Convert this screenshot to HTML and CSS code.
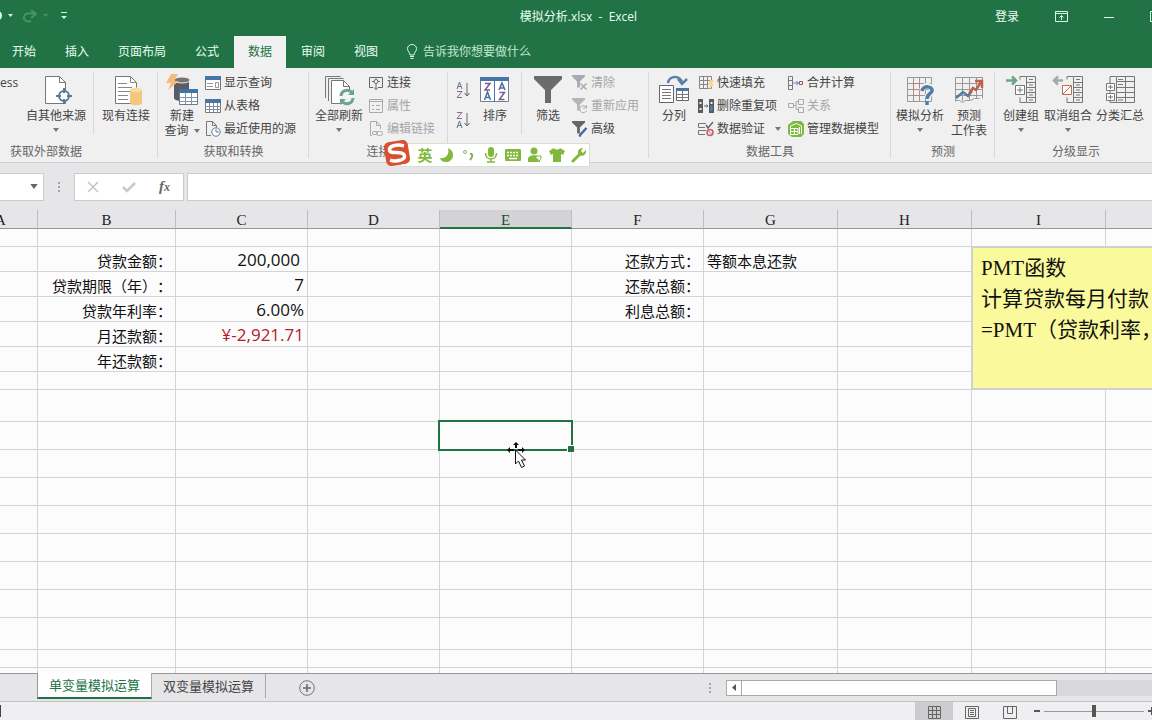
FILE: index.html
```html
<!DOCTYPE html>
<html lang="zh-CN">
<head>
<meta charset="utf-8">
<title>模拟分析.xlsx - Excel</title>
<link rel="stylesheet" href="styles.css">
</head>
<body>
<svg class="defs" aria-hidden="true">
  <symbol id="caret" viewBox="0 0 6 4"><path d="M0 0h6L3 4z" fill="currentColor"/></symbol>
  <symbol id="funnel" viewBox="0 0 28 28"><path d="M0 0h28v3L17 14v13h-6V14L0 3z" fill="currentColor"/></symbol>
</svg>

<header class="titlebar">
  <div class="quick">
    <button class="quick-undo" aria-label="撤消"><svg width="14" height="12" viewBox="0 0 14 12"><path d="M0 2c2 1 2 7-1 8z" fill="#e8fff2" stroke="#e8fff2"/><path d="M8 4h5l-2.500 3z" fill="#d5f5e2"/></svg></button>
    <button class="quick-redo" aria-label="恢复"><svg width="27" height="16" viewBox="0 0 27 16"><path d="M9 13C2 15 0 9 4 6c2-1 5-1 9 0M9 2l5 4-5 4" fill="none" stroke="#4b9168" stroke-width="2"/><path d="M21 6h5l-2.500 3z" fill="#4b9168"/></svg></button>
    <button aria-label="自定义快速访问工具栏"><svg width="6" height="8" viewBox="0 0 6 8"><path d="M0 .5h6" stroke="#d5f5e2"/><path d="M0 4h6L3 7z" fill="#d5f5e2"/></svg></button>
  </div>
  <h1 class="doc-title">模拟分析.xlsx &nbsp;- &nbsp;Excel</h1>
  <div class="window-tools">
    <a class="signin" href="#">登录</a>
    <button aria-label="功能区显示选项"><svg width="13" height="11" viewBox="0 0 13 11" fill="none" stroke="#d9f7e5"><path d="M.5.5h12v10H.5zM.5 2.500h12M6.500 9V4.500M4.500 6.500l2-2 2 2"/></svg></button>
    <button aria-label="最小化"><svg width="10" height="11" viewBox="0 0 10 11"><path d="M0 6.500h10" stroke="#d9f7e5"/></svg></button>
    <button aria-label="最大化"><svg width="10" height="11" viewBox="0 0 10 11"><path d="M.5.5h9v10h-9z" fill="none" stroke="#d9f7e5"/></svg></button>
  </div>
</header>

<nav class="tabs">
  <button>开始</button><button>插入</button><button>页面布局</button><button>公式</button><button class="active">数据</button><button>审阅</button><button>视图</button>
  <button class="tell"><svg width="10" height="15" viewBox="0 0 10 15" fill="none" stroke="#d9f7e5"><path d="M3 11c0-3-2.500-3-2.500-6.500a4.500 4 0 0 1 9 0C9.500 8 7 8 7 11zM3 12.500h4M3.500 14.500h3"/></svg>告诉我你想要做什么</button>
</nav>

<section class="ribbon">
  <div class="group g-external">
    <div class="body">
      <span class="clipped">ess</span>
      <button class="big w70"><svg width="34" height="32" viewBox="0 0 34 32"><path d="M6.500 2.500h14l6 6v21h-20z" fill="#fff" stroke="#777"/><path d="M20.500 2.500v6h6" fill="none" stroke="#777"/><circle cx="25" cy="22" r="5" fill="#fff" stroke="#5b76a0" stroke-width="2"/><path d="M25 14v5M25 25v5M17 22h5M28 22h5" stroke="#5b76a0" stroke-width="2"/></svg>自其他来源<svg class="caret"><use href="#caret"/></svg></button>
      <i class="sep"></i>
      <button class="big w60"><svg width="32" height="32" viewBox="0 0 32 32"><path d="M5.500 2.500h15l6 6v21h-21z" fill="#fff" stroke="#777"/><path d="M20.500 2.500v6h6M8 9.500h9M8 13.500h14M8 17.500h14M8 21.500h10M8 25.500h10" fill="none" stroke="#888"/><path d="M20 16v13c0 3 12 3 12 0V16z" fill="#f3c77d"/><ellipse cx="26" cy="16" rx="6" ry="2.500" fill="#f9dba3"/></svg>现有连接</button>
    </div>
    <div class="label"><span class="ext-label">获取外部数据</span></div>
  </div>

  <div class="group g-get">
    <div class="body">
      <button class="big w46"><svg width="32" height="32" viewBox="0 0 32 32"><path d="M8 7v17c0 4 15 4 15 0V7z" fill="#5d5d61"/><ellipse cx="16" cy="6" rx="8" ry="3" fill="#747478" stroke="#eee"/><path d="M5 0h7L8 7h5L2 16l3-7H0z" fill="#f2bd7c"/><path d="M13.500 15.500h18v15h-18z" fill="#fff" stroke="#6a7a8c"/><path d="M13 15h19v4H13z" fill="#3f74a8"/><path d="M14 23.500h17M14 27.500h17M19.500 19v11M25.500 19v11" stroke="#8195a8"/></svg>新建<span class="nowrap">查询<svg class="caret inline"><use href="#caret"/></svg></span></button>
      <div class="stack">
        <button><svg viewBox="0 0 16 16"><path d="M.5 1.500h15v13H.5z" fill="#fff" stroke="#777"/><path d="M0 1h16v4H0z" fill="#4675a8"/><path d="M2 8.500h6M2 11.500h6M10.500 7.500h3v5h-3z" fill="none" stroke="#999"/></svg>显示查询</button>
        <button><svg viewBox="0 0 16 16"><path d="M.5 1.500h15v13H.5z" fill="#fff" stroke="#777"/><path d="M0 1h16v4H0z" fill="#4675a8"/><path d="M4.500 5v10M8.500 5v10M12.500 5v10M0 8.500h16M0 11.500h16" stroke="#7e8d99"/></svg>从表格</button>
        <button><svg viewBox="0 0 16 16"><path d="M6 14.500H1.500V.5h6l4 4v2M7.500.5v4h4" fill="none" stroke="#777"/><circle cx="11" cy="11" r="4.200" fill="#fff" stroke="#5e7995"/><path d="M11 8v3h3" fill="none" stroke="#5e7995"/></svg>最近使用的源</button>
      </div>
    </div>
    <div class="label">获取和转换</div>
  </div>

  <div class="group g-conn">
    <div class="body">
      <button class="big w58"><svg width="32" height="32" viewBox="0 0 32 32" fill="none"><path d="M2.500 24V2.500h15M5.500 27V4.500h15" stroke="#777"/><path d="M8.500 6.500h12l6 6v17h-18z" fill="#fff" stroke="#777"/><path d="M20.500 6.500v6h6" stroke="#777"/><circle cx="24" cy="23" r="8" fill="#f2f5f3"/><path d="M18 22a6 6 0 0 1 11-3M30 24a6 6 0 0 1-11 3" stroke="#6ba58a" stroke-width="3"/><path d="M31 15v6h-6zM17 31v-6h6z" fill="#6ba58a"/></svg>全部刷新<svg class="caret"><use href="#caret"/></svg></button>
      <div class="stack">
        <button><svg viewBox="0 0 16 16" fill="none" stroke="#666"><path d="M5 12.500H1.500v-10h13v10H10"/><circle cx="8" cy="6.500" r="2"/><path d="M8 3.500v1M8 8.500v6M4 6.500h2M10 6.500h2M6 12.500l2 2 2-2"/></svg>连接</button>
        <button disabled><svg viewBox="0 0 16 16" fill="none" stroke="#aaa"><path d="M1.500 1.500h13v13h-13zM1 3.500h14"/><path d="M4 7.500h2M4 11.500h2M8 7.500h4M8 11.500h4"/></svg>属性</button>
        <button disabled><svg viewBox="0 0 16 16" fill="none" stroke="#aaa"><path d="M4 14.500H2.500V.5h6l4 4V8M8.500.5v4h4"/><rect x="4.500" y="10.500" width="5" height="3" rx="1.500"/><rect x="8.500" y="10.500" width="6" height="4" rx="2"/></svg>编辑链接</button>
      </div>
    </div>
    <div class="label">连接</div>
  </div>

  <div class="group g-sort">
    <div class="body">
      <div class="sorters">
        <button aria-label="升序"><svg width="15" height="18" viewBox="0 0 15 18" fill="none"><path d="M1 8l2.500-7L6 8M2 5.500h3" stroke="#5d7394"/><path d="M1 10.500h5l-5 6h5" stroke="#8d6794"/><path d="M11 2v13M8.500 12l2.500 3 2.500-3" stroke="#666"/></svg></button>
        <button aria-label="降序"><svg width="15" height="18" viewBox="0 0 15 18" fill="none"><path d="M1 1.500h5l-5 6h5" stroke="#8d6794"/><path d="M1 17l2.500-7L6 17M2 14.500h3" stroke="#5d7394"/><path d="M11 2v13M8.500 12l2.500 3 2.500-3" stroke="#666"/></svg></button>
      </div>
      <button class="big w48"><svg width="30" height="32" viewBox="0 0 30 32" fill="none"><path d="M.5 3.500h28v24H.5z" fill="#fff" stroke="#708090"/><path d="M0 3h29v4H0zM14 3h1v25h-1z" fill="#4675a8"/><path d="M5 9.500h5l-5 6.500h5" stroke="#7d5a91" stroke-width="1.500"/><path d="M4.500 26l3-8 3 8M5.500 23.500h4M19 16l3-7 3 7M20 14h4" stroke="#4a719e" stroke-width="1.500"/><path d="M19.500 18.500h5l-5 7h5" stroke="#7d5a91" stroke-width="1.500"/></svg>排序</button>
      <i class="sep"></i>
      <button class="big w48"><svg width="28" height="32" viewBox="0 -2 28 32" color="#6b6b6d"><use href="#funnel" width="28" height="28"/></svg>筛选</button>
      <div class="stack">
        <button disabled><svg viewBox="0 0 16 16" color="#a3acb5"><use href="#funnel" width="13" height="13"/><path d="M8.500 8.500l6 6M14.500 8.500l-6 6" stroke="#b5a5aa" stroke-width="1.500"/></svg>清除</button>
        <button disabled><svg viewBox="0 0 16 16" color="#b5b5b5"><use href="#funnel" width="13" height="13"/><path d="M14 9a3.500 3.500 0 1 0 .5 3.500M14.500 7v3H11" fill="none" stroke="#aaa"/></svg>重新应用</button>
        <button><svg viewBox="0 0 16 16" color="#666"><use href="#funnel" width="13" height="13"/><path d="M14.500 7l-6 6.500-1 2" stroke="#456ba3" stroke-width="2.500"/></svg>高级</button>
      </div>
    </div>
  </div>

  <div class="group g-tools">
    <div class="body">
      <button class="big w48"><svg width="32" height="32" viewBox="0 0 32 32" fill="none"><path d="M10 9c1-8 13-8 14 0M20 5l4 5 5-5" stroke="#5a7fa8" stroke-width="2.500"/><path d="M1.500 11.500h14v17h-14z" fill="#fff" stroke="#666"/><path d="M4 15.500h9M4 18.500h9M4 21.500h9M4 24.500h9" stroke="#777"/><path d="M18.500 14.500h12v12h-12z" fill="#fff" stroke="#666"/><path d="M18 14h13v3H18z" fill="#4675a8"/><path d="M18 20.500h12M18 23.500h12M24.500 17v9" stroke="#777"/></svg>分列</button>
      <div class="stack">
        <button><svg viewBox="0 0 16 16" fill="none"><path d="M1.500 1.500h12v12h-12zM1 5.500h13M1 9.500h10M5.500 1v13M9.500 1v13" stroke="#888"/><path d="M12 5h4l-2 4h2l-5 6 1-5h-2z" fill="#f4d790"/></svg>快速填充</button>
        <button><svg viewBox="0 0 16 16"><path d="M0 1h5v14H0zM11 1h5v14h-5z" fill="#5b5b5e"/><path d="M1.500 4h2v2h-2zM12.500 4h2v2h-2zM1.500 10h2v2h-2z" fill="#eee"/><path d="M12.500 8h2v5h-2z" fill="#4c83bd"/><path d="M6 8h4M8.500 6.500L10 8 8.500 9.500" fill="none" stroke="#47688d"/></svg>删除重复项</button>
        <button><svg viewBox="0 0 16 16" fill="none"><path d="M8 2.500H.5v4H7M8 9.500H.5v4H7" stroke="#777"/><path d="M8 4l2 3 5-6" stroke="#666" stroke-width="1.500"/><circle cx="12" cy="11.500" r="3" stroke="#c55d68" stroke-width="1.500"/><path d="M10 9.500l4 4" stroke="#c55d68"/></svg>数据验证<svg class="caret far"><use href="#caret"/></svg></button>
      </div>
      <div class="stack">
        <button><svg viewBox="0 0 16 16" fill="none"><path d="M.5 1.500h4v13h-4zM0 5.500h5M0 10.500h5" stroke="#777"/><path d="M5.500 8h5M8.500 6l2 2-2 2" stroke="#557fae"/><path d="M11.500 6.500h3v3h-3z" stroke="#a8516a"/></svg>合并计算</button>
        <button disabled><svg viewBox="0 0 16 16" fill="none" stroke="#aaa"><path d="M.5 5.500h5v4h-5zM10.500 1.500h5v5h-5zM10.500 9.500h5v5h-5zM10 3.500H8v8h2M6 7.500h2"/></svg>关系</button>
        <button><svg viewBox="0 0 16 16"><path d="M5 0h8l3 3v10l-3 3H4l-4-3V4z" fill="#7db83f"/><path d="M2.500 5l6-2.500L13.500 5v8M2.500 5v9M3 7.500h7v6H3M6.500 7.500v6M3 10.500h7M11.500 6v7" fill="none" stroke="#fff"/></svg>管理数据模型</button>
      </div>
    </div>
    <div class="label">数据工具</div>
  </div>

  <div class="group g-forecast">
    <div class="body">
      <button class="big w52"><svg width="30" height="32" viewBox="0 0 30 32" fill="none"><path d="M2.500 3.500h24v24h-24zM2 9.500h25M2 15.500h25M2 21.500h25M8.500 3v25M14.500 3v25M20.500 3v25" stroke="#999"/><path d="M8.500 9.500h6v6h-6zM8.500 21.500h6" stroke="#c67a72"/><path d="M17 16c1-6 11-5 10 1-1 4-5 3-5 8" stroke="#f2f2f2" stroke-width="6"/><path d="M17 17c1-6 11-5 10 0-1 3-5 3-5 8M22 27v4" stroke="#507da5" stroke-width="3.500"/></svg>模拟分析<svg class="caret"><use href="#caret"/></svg></button>
      <button class="big w46"><svg width="30" height="32" viewBox="0 0 30 32" fill="none"><path d="M1.500 27.500v-24h27v21M1.500 26.500h4l3 2 3-2h5l4-2h5M1 9.500h27M1 15.500h27M1 21.500h27M8.500 3v24M15.500 3v24M22.500 3v21" stroke="#999"/><path d="M2 24l7-6 5 4 4-5" stroke="#4e7e9f" stroke-width="2.500"/><path d="M15 20l4-6 3 2 5-8M21 7h7v7" stroke="#bd6148" stroke-width="2.500"/></svg>预测<span class="nowrap">工作表</span></button>
    </div>
    <div class="label">预测</div>
  </div>

  <div class="group g-outline">
    <div class="body">
      <button class="big w48"><svg width="32" height="32" viewBox="0 0 32 32" fill="none"><path d="M1 6.500h9M7 2.500l4 4-4 4" stroke="#6aa586" stroke-width="2.500"/><path d="M21.500 2.500h9v26h-9zM21 8.500h9M21 13.500h9M21 18.500h9M21 23.500h9M24 5.500h4M24 11h4M24 16h4M24 21h4M24 26h4M21 2.500h-6v3M21 28.500h-6v-5" stroke="#777"/><path d="M10.500 11.500h9v9h-9zM12 16h6M15 13v6" fill="#fff" stroke="#777"/></svg>创建组<svg class="caret"><use href="#caret"/></svg></button>
      <button class="big w46"><svg width="32" height="32" viewBox="0 0 32 32" fill="none"><path d="M2 6.500h9M6 2.500l-4 4 4 4" stroke="#a3aaa8" stroke-width="2.500"/><path d="M21.500 2.500h9v26h-9zM21 8.500h9M21 13.500h9M21 18.500h9M21 23.500h9M24 5.500h4M24 11h4M24 16h4M24 21h4M24 26h4M21 2.500h-6v3M21 28.500h-6v-5" stroke="#777"/><path d="M10.500 11.500h9v9h-9zM11 20l8-8" fill="#fff" stroke="#bd6e55"/></svg>取消组合<svg class="caret"><use href="#caret"/></svg></button>
      <button class="big w58"><svg width="32" height="32" viewBox="0 0 32 32" fill="none" stroke="#777"><path d="M12.500 2.500h18v26h-18zM12 7.500h18M12 13.500h18M12 18.500h18M12 23.500h18M21.500 3v25M14 5.500h5M14 10.500h5M14 26h5M12 2.500H6v26h6"/><path d="M2.500 9.500h8v7h-8zM4 13h5M6.500 11v4M2.500 19.500h8v7h-8zM4 23h5M6.500 21v4" fill="#fff"/></svg>分类汇总</button>
    </div>
    <div class="label">分级显示</div>
  </div>

  <div class="ime">
    <svg class="ime-logo" width="28" height="28" viewBox="0 0 28 28"><g transform="rotate(-9 14 14)"><rect x="2" y="2" width="24" height="24" rx="5" fill="#d8502f"/><path d="M22 8C15 5 7 6 7 10c0 5 14 2 14 8 0 4-9 5-15 2" fill="none" stroke="#fff" stroke-width="3.500"/></g></svg>
    <button class="ime-lang">英</button>
    <button aria-label="半角"><svg width="16" height="16" viewBox="0 0 16 16"><path d="M9 1c8 3 6 14-2 14-3 0-5-1-6-4 5 1 10-3 8-10z" fill="#82b93c"/></svg></button>
    <button aria-label="标点"><svg width="16" height="16" viewBox="0 0 16 16"><circle cx="4" cy="5" r="1.500" fill="none" stroke="#8fb066"/><path d="M9 7c3-1 3 3 0 6" fill="none" stroke="#8aac5e" stroke-width="2"/></svg></button>
    <button aria-label="语音"><svg width="16" height="16" viewBox="0 0 16 16"><rect x="5" y="0" width="6" height="10" rx="3" fill="#82b93c"/><path d="M2.500 6c0 8 11 8 11 0M8 12v3M4 15h8" fill="none" stroke="#82b93c" stroke-width="1.500"/></svg></button>
    <button aria-label="软键盘"><svg width="16" height="16" viewBox="0 0 16 16"><rect y="2" width="16" height="12" rx="1" fill="#82b93c"/><path d="M2 5.500h12M2 8.500h12" stroke="#fff" stroke-width="1.500" stroke-dasharray="2 1"/><path d="M4 11.500h8" stroke="#fff" stroke-width="1.500"/></svg></button>
    <button aria-label="用户"><svg width="16" height="16" viewBox="0 0 16 16"><circle cx="7" cy="4" r="3.500" fill="#82b93c"/><path d="M1 15v-3c0-5 12-5 12 0v3z" fill="#82b93c"/><path d="M3 12h4M9 9h5v3l-3 3v-3H9z" fill="#fff" stroke="#82b93c"/></svg></button>
    <button aria-label="皮肤"><svg width="16" height="16" viewBox="0 0 16 16"><path d="M5 1c1 2 5 2 6 0l5 3-2 4-2-1v8H4V7L2 8 0 4z" fill="#82b93c"/></svg></button>
    <button aria-label="工具箱"><svg width="16" height="16" viewBox="0 0 16 16"><path d="M2 14l7-7" stroke="#82b93c" stroke-width="3" stroke-linecap="round"/><path d="M12 1c-5 0-6 4-4 7 3 2 8 0 7-5l-3 3-2-2z" fill="#82b93c"/></svg></button>
  </div>
</section>

<section class="formula-bar">
  <div class="namebox"><input aria-label="名称框"><button aria-label="名称列表"><svg width="8" height="5" viewBox="0 0 6 4" color="#666"><use href="#caret"/></svg></button></div>
  <i class="dots"></i>
  <div class="formula-tools">
    <button aria-label="取消"><svg width="12" height="12" viewBox="0 0 12 12"><path d="M1 1l10 10M11 1L1 11" stroke="#c4c4c6" stroke-width="1.500"/></svg></button>
    <button aria-label="输入"><svg width="14" height="12" viewBox="0 0 14 12"><path d="M1 6l4 4 8-8" fill="none" stroke="#c9c9cb" stroke-width="2.500"/></svg></button>
    <button class="fx" aria-label="插入函数"><i>f<small>x</small></i></button>
  </div>
  <input class="formula" aria-label="编辑栏">
</section>

<main class="sheet">
  <table>
    <colgroup><col class="cA"><col class="cB"><col class="c132"><col class="c132"><col class="c132"><col class="c132"><col class="c134"><col class="c134"><col class="c134"><col></colgroup>
    <thead><tr><th class="colA">A</th><th>B</th><th>C</th><th>D</th><th class="current">E</th><th>F</th><th>G</th><th>H</th><th>I</th><th></th></tr></thead>
    <tbody>
      <tr class="r18"><td></td><td></td><td></td><td></td><td></td><td></td><td></td><td></td><td></td><td></td></tr>
      <tr class="r25"><td></td><td class="name">贷款金额：</td><td class="num pad">200,000</td><td></td><td></td><td class="name">还款方式：</td><td>等额本息还款</td><td></td><td class="note-anchor"><aside class="note"><p>PMT函数</p><p>计算贷款每月付款</p><p>=PMT（贷款利率，</p></aside></td><td></td></tr>
      <tr class="r25"><td></td><td class="name">贷款期限（年）：</td><td class="num">7</td><td></td><td></td><td class="name">还款总额：</td><td></td><td></td><td></td><td></td></tr>
      <tr class="r25"><td></td><td class="name">贷款年利率：</td><td class="num">6.00%</td><td></td><td></td><td class="name">利息总额：</td><td></td><td></td><td></td><td></td></tr>
      <tr class="r25"><td></td><td class="name">月还款额：</td><td class="num neg">¥-2,921.71</td><td></td><td></td><td></td><td></td><td></td><td></td><td></td></tr>
      <tr class="r25"><td></td><td class="name">年还款额：</td><td></td><td></td><td></td><td></td><td></td><td></td><td></td><td></td></tr>
      <tr class="r18"><td></td><td></td><td></td><td></td><td></td><td></td><td></td><td></td><td></td><td></td></tr>
      <tr class="r32"><td></td><td></td><td></td><td></td><td></td><td></td><td></td><td></td><td></td><td></td></tr>
      <tr class="r28"><td></td><td></td><td></td><td></td><td class="selected"><svg class="cursor" width="20" height="28" viewBox="0 0 20 28"><path d="M9 1L6 4h2v3h2V4h2zM0 9l3-3v2h4v2H3v2zM18 9l-3-3v2h-4v2h4v2z" fill="#111"/><path d="M8.500 9v14l3-3 3 6.500 3-1.500-3-6h4z" fill="#fff" stroke="#111"/></svg></td><td></td><td></td><td></td><td></td><td></td></tr>
      <tr class="r28"><td></td><td></td><td></td><td></td><td></td><td></td><td></td><td></td><td></td><td></td></tr>
      <tr class="r28"><td></td><td></td><td></td><td></td><td></td><td></td><td></td><td></td><td></td><td></td></tr>
      <tr class="r28"><td></td><td></td><td></td><td></td><td></td><td></td><td></td><td></td><td></td><td></td></tr>
      <tr class="r28"><td></td><td></td><td></td><td></td><td></td><td></td><td></td><td></td><td></td><td></td></tr>
      <tr class="r28"><td></td><td></td><td></td><td></td><td></td><td></td><td></td><td></td><td></td><td></td></tr>
      <tr class="r28"><td></td><td></td><td></td><td></td><td></td><td></td><td></td><td></td><td></td><td></td></tr>
      <tr class="r32"><td></td><td></td><td></td><td></td><td></td><td></td><td></td><td></td><td></td><td></td></tr>
      <tr class="r18"><td></td><td></td><td></td><td></td><td></td><td></td><td></td><td></td><td></td><td></td></tr>
      <tr class="r18"><td></td><td></td><td></td><td></td><td></td><td></td><td></td><td></td><td></td><td></td></tr>
    </tbody>
  </table>
</main>

<div class="sheet-tabs">
  <button class="sheet-tab on">单变量模拟运算</button>
  <button class="sheet-tab">双变量模拟运算</button>
  <button class="add" aria-label="新工作表"><svg width="16" height="16" viewBox="0 0 16 16"><circle cx="8" cy="8" r="7.300" fill="none" stroke="#777"/><path d="M8 4v8M4 8h8" stroke="#666" stroke-width="1.500"/></svg></button>
  <i class="dots"></i>
  <div class="scroll">
    <button aria-label="向左滚动"><svg width="4" height="7" viewBox="0 0 4 7"><path d="M4 0v7L0 3.500z" fill="#555"/></svg></button>
    <div class="thumb"></div>
  </div>
</div>

<footer class="status">
  <i class="status-mark"></i>
  <div class="views">
    <button class="on" aria-label="普通"><svg width="13" height="13" viewBox="0 0 13 13"><path d="M.5.5h12v12H.5zM.5 4.500h12M.5 8.500h12M4.500 0v13M8.500 0v13" fill="none" stroke="#666"/></svg></button>
    <button aria-label="页面布局视图"><svg width="14" height="13" viewBox="0 0 14 13"><path d="M.5.5h13v12H.5zM3.500 2.500h7v8h-7zM5 4.500h4M5 6.500h4M5 8.500h4" fill="none" stroke="#666"/></svg></button>
    <button aria-label="分页预览"><svg width="14" height="13" viewBox="0 0 14 13"><path d="M.5.5h13v12H.5zM4.500 0v7.500M9.500 0v7.500M4.500 7.500h5" fill="none" stroke="#666"/></svg></button>
  </div>
  <button aria-label="缩小"><svg width="6" height="12" viewBox="0 0 6 12"><path d="M0 6h6" stroke="#555" stroke-width="2"/></svg></button>
  <input class="zoom" type="range" value="50" aria-label="缩放">
  <button aria-label="放大"><svg width="8" height="12" viewBox="0 0 8 12"><path d="M0 6h8M4 2v8" stroke="#555" stroke-width="2"/></svg></button>
</footer>
</body>
</html>
```

FILE: styles.css
```css
* { box-sizing: border-box; }
body {
  margin: 0;
  height: 100vh;
  display: flex;
  flex-direction: column;
  overflow: hidden;
  background: #e6e5e7;
  color: #444;
  font: 12px/15px "Open Sans", "Noto Sans CJK SC", sans-serif;
}
button { margin: 0; padding: 0; border: 0; background: none; color: inherit; font: inherit; flex: none; }
input { min-width: 0; margin: 0; padding: 0; border: 0; background: none; font: inherit; }
svg { display: block; flex: none; }
.defs { position: absolute; width: 0; height: 0; }

/* title bar */
.titlebar { flex: none; height: 36px; padding-bottom: 4px; display: grid; grid-template-columns: 1fr auto 1fr; align-items: center; background: #217346; color: #eafff2; overflow: hidden; }
.quick { display: flex; align-items: center; gap: 8px; }
.quick-redo { margin-right: 4px; }
.doc-title { margin: 0; font-size: 12px; font-weight: 400; padding-left: 5px; }
.window-tools { display: flex; align-items: center; justify-content: flex-end; gap: 36px; margin-right: -8px; }
.signin { color: inherit; text-decoration: none; }

/* ribbon tabs */
.tabs { flex: none; height: 32px; display: flex; gap: 1px; background: #217346; color: #eafff2; }
.tabs button { padding: 0 14px 2px; }
.tabs button:first-child { margin-left: -2px; }
.tabs .active { background: #f2f1f2; color: #217346; }
.tabs .tell { display: flex; align-items: center; gap: 6px; color: #c5e5d1; }

/* ribbon */
.ribbon { flex: none; height: 95px; display: flex; position: relative; background: #f1f0f1; border-bottom: 1px solid #cfced0; white-space: nowrap; }
.group { flex: none; display: flex; flex-direction: column; padding-top: 3px; position: relative; }
.group::after { content: ""; position: absolute; right: 0; top: 4px; bottom: 4px; width: 1px; background: #d8d7d9; }
.g-external { width: 158px; }
.g-get { width: 151px; }
.g-conn { width: 139px; }
.g-sort { width: 201px; }
.g-tools { width: 242px; }
.g-forecast { width: 104px; }
.g-outline { flex: 1 0 157px; }
.g-outline::after { display: none; }
.body { display: flex; height: 73px; padding-left: 1px; }
.label { text-align: center; color: #666; line-height: 16px; }
.g-external .label { padding-right: 66px; }
.g-forecast .body { padding-left: 3px; }
.g-outline .body { padding-left: 2px; }
.g-outline .label { width: 162px; }
.clipped { width: 21px; padding-top: 4px; margin-left: -1px; }
.big { display: flex; flex-direction: column; align-items: center; padding-top: 3px; }
.big > svg:first-child { margin-bottom: 2px; }
.w46 { width: 46px; }
.w48 { width: 48px; }
.w52 { width: 52px; }
.w58 { width: 58px; }
.w60 { width: 60px; }
.w70 { width: 70px; }
.caret { width: 6px; height: 4px; margin-top: 5px; color: #777; }
.caret.inline { display: inline-block; margin: 0 0 2px 5px; }
.caret.far { margin: 0 0 0 7px; }
.nowrap { white-space: nowrap; }
.sep { width: 1px; margin: 1px 2px 10px; background: #d8d7d9; }
.stack { display: flex; flex-direction: column; align-items: flex-start; }
.stack button { height: 23px; display: flex; align-items: center; gap: 3px; }
.stack button > svg:first-child { width: 16px; height: 16px; }
.stack button:disabled { color: #a5a5a7; }
.g-tools .stack + .stack { margin-left: 7px; }
.sorters { display: flex; flex-direction: column; gap: 12px; padding: 10px 0 0 7px; }

/* input method bar */
.ime { position: absolute; left: 400px; top: 75px; height: 24px; width: 190px; padding-left: 16px; display: flex; align-items: center; gap: 6px; background: #fff; border: 1px solid #d7dfcf; }
.ime-logo { position: absolute; left: -18px; top: -5px; }
.ime-lang { color: #82b93c; font-weight: 700; font-size: 15px; width: 16px; }

/* formula bar */
.formula-bar { flex: none; height: 47px; display: flex; align-items: center; }
.namebox { display: flex; align-items: center; width: 44px; height: 28px; padding-right: 5px; background: #fff; border: solid #cbcacc; border-width: 1px 1px 1px 0; }
.namebox input { flex: 1; }
.dots { width: 2px; height: 10px; background: repeating-linear-gradient(#a5a5a7 0 2px, transparent 2px 4px); }
.formula-bar .dots { margin: 0 14px; }
.formula-tools { display: flex; align-items: center; gap: 23px; width: 110px; height: 28px; padding-left: 12px; margin-right: 3px; background: #fff; border: 1px solid #cbcacc; }
.fx { font: 700 15px/20px "Liberation Serif", serif; color: #666; }
.fx small { font-size: 12px; }
.formula { flex: 1; height: 28px; background: #fff; border: solid #cbcacc; border-width: 1px 0 1px 1px; }

/* worksheet */
.sheet { flex: 1; min-height: 0; overflow: hidden; background: #fdfcfd; border-bottom: 1px solid #979698; }
table { width: 100%; table-layout: fixed; border-collapse: separate; border-spacing: 0; }
.cA { width: 38px; }
.cB { width: 138px; }
.c132 { width: 132px; }
.c134 { width: 134px; }
th { height: 19px; padding: 3px 0 0; background: #e6e5e7; border-right: 1px solid #bdbcbe; border-bottom: 1px solid #979698; font: 15px/15px "Liberation Serif", serif; color: #222; }
.colA { text-align: left; text-indent: -5px; }
.current { background: #d3d2d4; border-bottom: 2px solid #217346; color: #174e30; line-height: 14px; }
td { padding: 6px 3px 0; border-right: 1px solid #d4d3d5; border-bottom: 1px solid #d4d3d5; font: 15px/18px "Liberation Serif", "Noto Sans CJK SC", sans-serif; color: #111; white-space: nowrap; text-spacing-trim: space-all; }
th:last-child, td:last-child { border-right: 0; }
.r18 { height: 18px; }
.r25 { height: 25px; }
.r28 { height: 28px; }
.r32 { height: 32px; }
.r18 td, .r28 td, .r32 td { padding: 0; line-height: 1px; }
.name { text-align: right; }
.num { padding-top: 2px; text-align: right; font: 17px/22px "Open Sans", sans-serif; }
.num.pad { padding-right: 7px; }
.neg { color: #b3202c; }
.selected { position: relative; }
.selected::before { content: ""; position: absolute; inset: -2px; border: 2px solid #217346; }
.selected::after { content: ""; position: absolute; right: -3px; bottom: -3px; width: 6px; height: 6px; background: #217346; border: solid #fff; border-width: 1px 0 0 1px; }
.cursor { position: absolute; left: 67px; top: 19px; z-index: 1; }
.note-anchor { position: relative; }
.note { position: absolute; left: -1px; top: -1px; width: 50vw; height: 144px; padding: 5px 8px; background: #faf99b; border: 2px solid #cfd1cf; }
.note p { margin: 0; font-size: 21px; line-height: 31px; }

/* sheet tabs and scroll bar */
.sheet-tabs { flex: none; height: 28px; display: flex; align-items: center; padding-left: 37px; border-bottom: 1px solid #c3c2c4; }
.sheet-tab { align-self: flex-start; height: 24px; padding: 0 11px; font-size: 13px; line-height: 22px; border-right: 1px solid #a9a8aa; }
.sheet-tab.on { padding: 0 11px; margin-top: -1px; height: 26px; background: #fff; color: #217346; border-left: 1px solid #979698; border-bottom: 2px solid #217346; }
.add { margin: 0 auto 0 33px; }
.sheet-tabs .dots { margin-right: 15px; }
.scroll { flex: 0 0 37vw; display: flex; height: 16px; background: #d9d8da; }
.scroll button { width: 16px; display: grid; place-items: center; background: #fff; border: 1px solid #a9a8aa; }
.thumb { width: 74%; background: #fff; border: 1px solid #a9a8aa; border-left-width: 0; }

/* status bar */
.status { flex: none; height: 18px; display: flex; align-items: center; background: #efeef0; overflow: hidden; }
.status-mark { width: 1px; height: 12px; background: #444; margin-right: auto; }
.views { display: flex; align-self: stretch; margin-right: 5px; }
.views button { width: 38px; padding-top: 2px; display: grid; place-items: center; }
.views .on { background: #cccbcd; }
.zoom { appearance: none; width: 100px; height: 12px; margin: 0 4px; background: linear-gradient(#999, #999) center / 100% 1px no-repeat; }
.zoom::-webkit-slider-thumb { appearance: none; width: 4px; height: 12px; background: #555; }
.status > button:last-child { margin-right: -4px; }
```
